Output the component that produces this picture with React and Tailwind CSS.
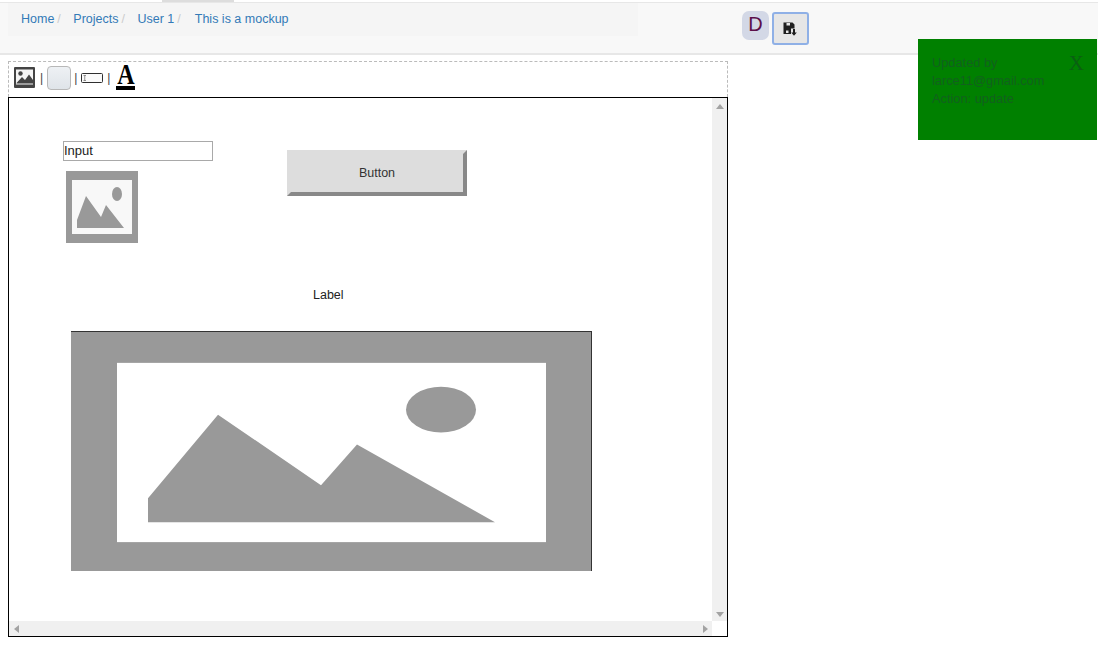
const font = { fontFamily: '"Liberation Sans", Arial, sans-serif' };

function Placeholder({ className }) {
  return (
    <svg viewBox="0 0 520 240" preserveAspectRatio="none" className={className}>
      <rect width="520" height="240" fill="#999999" />
      <rect x="46" y="31" width="429" height="180" fill="#ffffff" />
      <path d="M77 167 L147 83 L250 154 L286 113 L424 191 L77 191 Z" fill="#999999" />
      <ellipse cx="370" cy="78" rx="35" ry="23" fill="#999999" />
    </svg>
  );
}

function SmallPlaceholder({ className }) {
  return (
    <svg viewBox="0 0 72 72" className={className}>
      <rect width="72" height="72" fill="#999999" />
      <rect x="6" y="9" width="60" height="54" fill="#f8f8f8" />
      <path d="M11 57 L11 49 L20 25 L35 46 L40 34 L58 57 Z" fill="#999999" />
      <ellipse cx="51" cy="23" rx="5" ry="7" fill="#999999" />
    </svg>
  );
}

function Crumb({ children, sep = true, className = "" }) {
  return (
    <span className={className}>
      <span className="text-[#337ab7]">{children}</span>
      {sep && <span className="text-[#cccccc] pl-[3px]">/</span>}
    </span>
  );
}

const Pipe = ({ className }) => (
  <span className={"text-[12px] text-[#444444] leading-none " + className}>|</span>
);

export default function App() {
  return (
    <div style={font} className="relative w-[1098px] h-[651px] overflow-hidden bg-white text-[12.5px] text-[#333333]">
      {/* top nav */}
      <div className="relative mt-[2px] h-[53px] bg-[#f8f8f8] border-t border-b-2 border-[#e7e7e7] flex">
        <div className="absolute left-[162px] -top-[3px] w-[72px] h-[2px] bg-[#dddddd]" />
        <div className="w-[630px] h-[33px] ml-[8px] bg-[#f5f5f5] pl-[13px] pt-[7px] leading-[18px] flex">
          <Crumb className="mr-[12.5px]">Home</Crumb>
          <Crumb className="mr-[12.5px]">Projects</Crumb>
          <Crumb className="mr-[14px]">User 1</Crumb>
          <Crumb sep={false}>This is a mockup</Crumb>
        </div>
        <div className="ml-[104px] mt-[8px] w-[27px] h-[29px] rounded-[7px] bg-[#d3d8e6] text-[#5c0f4a] text-[20px] leading-[27px] text-center">D</div>
        <div className="ml-[3px] mt-[9px] w-[37px] h-[33px] rounded-[3px] border-2 border-[#8fb0e6] bg-[#e6e6e6] flex items-center justify-center pr-[1px]">
          <svg width="14" height="14" viewBox="0 0 14 14">
            <path d="M0.5 0.5 H9.5 L11.5 2.5 V6.5 H8 V12 H0.5 Z" fill="#1f1f1f" />
            <rect x="3.5" y="1" width="3.5" height="2.5" fill="#e6e6e6" />
            <rect x="3" y="8.5" width="2.5" height="2.5" fill="#e6e6e6" />
            <path d="M10 7 H12 V10.5 H13.8 L11 13.8 L8.2 10.5 H10 Z" fill="#1f1f1f" />
          </svg>
        </div>
      </div>

      {/* toolbar */}
      <div className="ml-[8px] mt-[6px] w-[720px] h-[36px] border border-dashed border-[#bbbbbb] border-b-0 flex items-center pl-[5px] pb-[4px]">
        <svg width="21" height="21" viewBox="0 0 21 21">
          <rect width="21" height="21" rx="1" fill="#444444" />
          <rect x="2" y="2.5" width="17" height="15" fill="#f4f4f4" />
          <circle cx="6.5" cy="6.5" r="2.2" fill="#444444" />
          <path d="M2.5 16 L8 10 L11 13 L15 7.5 L19 13 V16.5 H2.5 Z" fill="#444444" />
        </svg>
        <Pipe className="ml-[5px]" />
        <div className="ml-[4px] w-[24px] h-[24px] rounded-[4px] border border-[#b8b8b8] bg-gradient-to-b from-[#eef1f4] to-[#dfe4e9]" />
        <Pipe className="ml-[3px]" />
        <svg width="22" height="10" viewBox="0 0 22 10" className="ml-[4px]">
          <rect x="0.5" y="0.5" width="21" height="9" rx="1" fill="#fafafa" stroke="#2f2f2f" />
          <path d="M2.5 2.5 H5 M3.75 2.5 V7.5 M2.5 7.5 H5" stroke="#777777" strokeWidth="0.8" fill="none" />
        </svg>
        <Pipe className="ml-[4px]" />
        <div className="ml-[6px] flex flex-col items-center w-[19px]">
          <span style={{ fontFamily: '"Liberation Serif", serif' }} className="block text-[24px] leading-[20px] font-bold text-black scale-y-[1.25] origin-bottom">A</span>
          <span className="block w-[19px] h-[4px] bg-black" />
        </div>
      </div>

      {/* canvas */}
      <div className="ml-[8px] w-[720px] h-[540px] border border-black bg-white flex flex-col overflow-hidden">
        <div className="flex-1 flex min-h-0">
          <div className="relative flex-1">
            <div className="absolute left-[54px] top-[43px] w-[150px] h-[20px] border border-[#a9a9a9] text-[13px] leading-[18px] text-[#222222]">Input</div>
            <SmallPlaceholder className="absolute left-[57px] top-[73px] w-[72px] h-[72px]" />
            <div className="absolute left-[278px] top-[52px] w-[180px] h-[46px] bg-[#dddddd] border-[4px] border-t-[#dddddd] border-l-[#dddddd] border-r-[#888888] border-b-[#888888] flex items-center justify-center text-[#333333]">Button</div>
            <div className="absolute left-[304px] top-[189px] leading-[16px] text-[#222222]">Label</div>
            <div className="absolute left-[62px] top-[233px] w-[521px] h-[240px] border-t border-r border-[#333333]">
              <Placeholder className="w-full h-full block" />
            </div>
          </div>
          {/* vertical scrollbar */}
          <div className="w-[15px] bg-[#f0f0f0] flex flex-col justify-between items-start pl-[4px] pt-[6px] pb-[4px]">
            <div className="w-0 h-0 border-x-[4px] border-x-transparent border-b-[5px] border-b-[#a3a3a3]" />
            <div className="w-0 h-0 border-x-[4px] border-x-transparent border-t-[5px] border-t-[#a3a3a3]" />
          </div>
        </div>
        {/* horizontal scrollbar */}
        <div className="h-[15px] flex">
          <div className="flex-1 bg-[#f0f0f0] flex items-center justify-between pl-[5px] pr-[4px]">
            <div className="w-0 h-0 border-y-[4px] border-y-transparent border-r-[5px] border-r-[#a3a3a3]" />
            <div className="w-0 h-0 border-y-[4px] border-y-transparent border-l-[5px] border-l-[#a3a3a3]" />
          </div>
          <div className="w-[15px]" />
        </div>
      </div>

      {/* notification */}
      <div className="absolute left-[918px] top-[39px] w-[179px] h-[101px] bg-[#008000] pl-[14px] pr-[13px] pt-[15px] text-[12.8px] leading-[18px] text-[#12601e] flex justify-between items-start">
        <div>
          <div>Updated by</div>
          <div>larce11@gmail.com</div>
          <div>Action: update</div>
        </div>
        <span style={{ fontFamily: '"Liberation Serif", serif' }} className="-mt-[2px] text-[21px] leading-[22px] text-[#0a5f12]">X</span>
      </div>
    </div>
  );
}
